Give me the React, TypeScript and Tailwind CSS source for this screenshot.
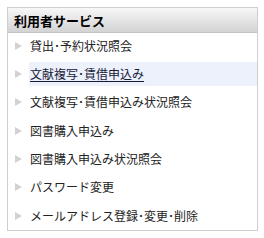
import React from 'react';

const items = [
    '貸出･予約状況照会',
    '文献複写･賃借申込み',
    '文献複写･賃借申込み状況照会',
    '図書購入申込み',
    '図書購入申込み状況照会',
    'パスワード変更',
    'メールアドレス登録･変更･削除',
];

export default function App() {
    const hovered = 1;

    return (
        <div className="w-[264px] h-[238px] bg-white pt-[7px] pl-[7px]" style={{ fontFamily: '"Noto Sans CJK JP", "Noto Sans", sans-serif' }}>
            <div className="w-[251px] h-[224px] border border-[#cfcfcf] flex flex-col">
                <div className="h-[25px] shrink-0 bg-gradient-to-b from-[#f7f7f7] to-[#d3d3d3] border-b border-[#c4c4c4] flex items-center pl-[6px]">
                    <span className="text-[13px] font-bold text-black leading-none">利用者サービス</span>
                </div>
                <ul className="flex flex-col gap-[4.4px] pt-[0.5px]">
                    {items.map((label, i) => (
                        <li key={label} className="h-[24px] flex items-center">
                            <span className="w-[21px] shrink-0 flex justify-start pl-[7px]">
                                <svg width="7" height="8" viewBox="0 0 7 8">
                                    <polygon points="0,0 7,4 0,8" fill="#d2d2d2" />
                                </svg>
                            </span>
                            <span
                                className={`flex-1 h-full flex items-center text-[12px] leading-none ${i === hovered ? 'bg-[#ecf1fb] text-[#1a1a3a] underline underline-offset-2' : 'text-[#222]'}`}
                            >
                                <span className="pl-px">{label}</span>
                            </span>
                        </li>
                    ))}
                </ul>
            </div>
        </div>
    );
}
